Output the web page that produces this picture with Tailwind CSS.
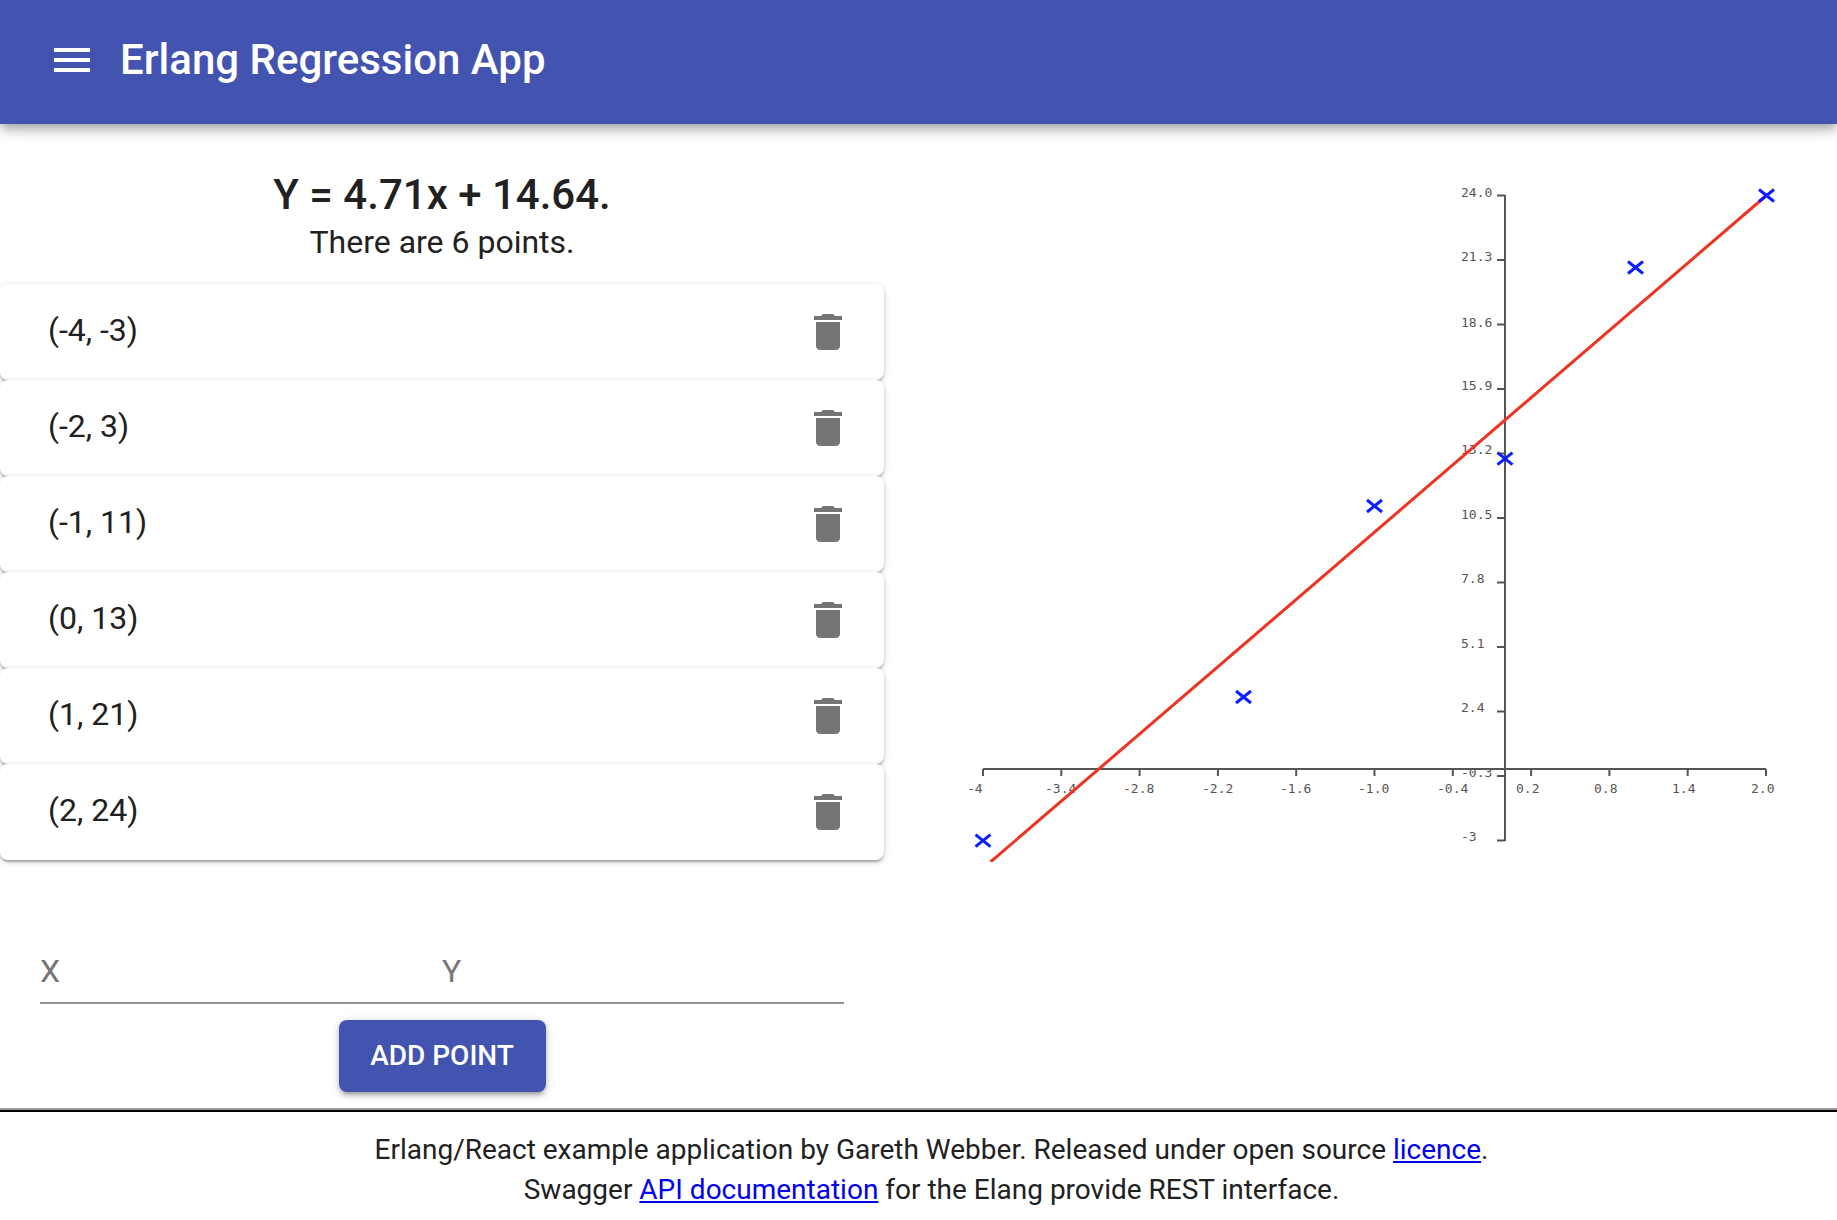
<!DOCTYPE html>
<html lang="en">
<head>
  <meta charset="UTF-8" />
  <meta name="viewport" content="width=device-width, initial-scale=1.0" />
  <title>Erlang Regression App</title>
  <script src="https://cdn.jsdelivr.net/npm/@tailwindcss/browser@4"></script>
</head>

<body class="bg-white text-[#212121] font-[Roboto,sans-serif]">
  <!-- App bar -->
  <header class="h-[124px] bg-[#4353b0] flex items-center pl-12 pb-1 text-white relative z-10 shadow-[0_4px_8px_-2px_rgba(0,0,0,0.2),0_8px_10px_0_rgba(0,0,0,0.14),0_2px_20px_0_rgba(0,0,0,0.12)]">
    <svg class="w-12 h-12 fill-white" viewBox="0 0 24 24"><path d="M3 18h18v-2H3v2zm0-5h18v-2H3v2zm0-7v2h18V6H3z"/></svg>
    <h1 class="ml-6 text-[42px] leading-[48px] font-medium">Erlang Regression App</h1>
  </header>

  <main class="flex h-[984px]">
    <!-- Left column -->
    <section class="w-[884px] shrink-0 pt-[46px]">
      <h2 class="text-center text-[42px] leading-[50px] font-medium">Y = 4.71x + 14.64.</h2>
      <p class="mt-[2px] text-center text-[32px] leading-10">There are 6 points.</p>

      <ul class="mt-[22px]">
        <li class="h-24 bg-white rounded-lg relative flex items-center justify-between pl-12 pr-8 text-[32px] shadow-[0_2px_6px_0_rgba(0,0,0,0.2),0_2px_2px_0_rgba(0,0,0,0.14),0_4px_2px_-2px_rgba(0,0,0,0.12)]">
          <span class="pb-1">(-4, -3)</span>
          <svg class="w-12 h-12 fill-[#757575]" viewBox="0 0 24 24"><path d="M6 19c0 1.1.9 2 2 2h8c1.1 0 2-.9 2-2V7H6v12zM19 4h-3.5l-1-1h-5l-1 1H5v2h14V4z"/></svg>
        </li>
        <li class="h-24 bg-white rounded-lg relative flex items-center justify-between pl-12 pr-8 text-[32px] shadow-[0_2px_6px_0_rgba(0,0,0,0.2),0_2px_2px_0_rgba(0,0,0,0.14),0_4px_2px_-2px_rgba(0,0,0,0.12)]">
          <span class="pb-1">(-2, 3)</span>
          <svg class="w-12 h-12 fill-[#757575]" viewBox="0 0 24 24"><path d="M6 19c0 1.1.9 2 2 2h8c1.1 0 2-.9 2-2V7H6v12zM19 4h-3.5l-1-1h-5l-1 1H5v2h14V4z"/></svg>
        </li>
        <li class="h-24 bg-white rounded-lg relative flex items-center justify-between pl-12 pr-8 text-[32px] shadow-[0_2px_6px_0_rgba(0,0,0,0.2),0_2px_2px_0_rgba(0,0,0,0.14),0_4px_2px_-2px_rgba(0,0,0,0.12)]">
          <span class="pb-1">(-1, 11)</span>
          <svg class="w-12 h-12 fill-[#757575]" viewBox="0 0 24 24"><path d="M6 19c0 1.1.9 2 2 2h8c1.1 0 2-.9 2-2V7H6v12zM19 4h-3.5l-1-1h-5l-1 1H5v2h14V4z"/></svg>
        </li>
        <li class="h-24 bg-white rounded-lg relative flex items-center justify-between pl-12 pr-8 text-[32px] shadow-[0_2px_6px_0_rgba(0,0,0,0.2),0_2px_2px_0_rgba(0,0,0,0.14),0_4px_2px_-2px_rgba(0,0,0,0.12)]">
          <span class="pb-1">(0, 13)</span>
          <svg class="w-12 h-12 fill-[#757575]" viewBox="0 0 24 24"><path d="M6 19c0 1.1.9 2 2 2h8c1.1 0 2-.9 2-2V7H6v12zM19 4h-3.5l-1-1h-5l-1 1H5v2h14V4z"/></svg>
        </li>
        <li class="h-24 bg-white rounded-lg relative flex items-center justify-between pl-12 pr-8 text-[32px] shadow-[0_2px_6px_0_rgba(0,0,0,0.2),0_2px_2px_0_rgba(0,0,0,0.14),0_4px_2px_-2px_rgba(0,0,0,0.12)]">
          <span class="pb-1">(1, 21)</span>
          <svg class="w-12 h-12 fill-[#757575]" viewBox="0 0 24 24"><path d="M6 19c0 1.1.9 2 2 2h8c1.1 0 2-.9 2-2V7H6v12zM19 4h-3.5l-1-1h-5l-1 1H5v2h14V4z"/></svg>
        </li>
        <li class="h-24 bg-white rounded-lg relative flex items-center justify-between pl-12 pr-8 text-[32px] shadow-[0_2px_6px_0_rgba(0,0,0,0.2),0_2px_2px_0_rgba(0,0,0,0.14),0_4px_2px_-2px_rgba(0,0,0,0.12)]">
          <span class="pb-1">(2, 24)</span>
          <svg class="w-12 h-12 fill-[#757575]" viewBox="0 0 24 24"><path d="M6 19c0 1.1.9 2 2 2h8c1.1 0 2-.9 2-2V7H6v12zM19 4h-3.5l-1-1h-5l-1 1H5v2h14V4z"/></svg>
        </li>
      </ul>

      <!-- Add point form -->
      <form class="mt-20 px-10">
        <div class="flex border-b-2 border-[#949494] h-16">
          <input type="text" placeholder="X" class="w-1/2 text-[32px] outline-none placeholder:text-[#757575]" />
          <input type="text" placeholder="Y" class="w-1/2 text-[32px] outline-none placeholder:text-[#757575]" />
        </div>
        <div class="mt-4 flex justify-center">
          <button type="button" class="w-[207px] h-[72px] bg-[#4353b0] text-white text-[28px] font-medium rounded-lg shadow-[0_2px_10px_0_rgba(0,0,0,0.2),0_4px_4px_0_rgba(0,0,0,0.14),0_6px_2px_-4px_rgba(0,0,0,0.12)]">ADD POINT</button>
        </div>
      </form>
    </section>

    <!-- Regression chart, viewBox is in page coordinates -->
    <section class="ml-[66px] pt-[46px]">
      <svg class="w-[887px] h-[692px]" viewBox="950 170 887 692">
        <g stroke="#555" stroke-width="2" fill="none">
          <path d="M1505 195V841"/>
          <path d="M983 769H1766"/>
          <path d="M1497 195.5h8M1497 260h8M1497 324.500h8M1497 389h8M1497 453.500h8M1497 518h8M1497 582.500h8M1497 647h8M1497 711.500h8M1497 776h8M1497 840.500h8"/>
          <path d="M983 769v7M1061.300 769v7M1139.600 769v7M1217.900 769v7M1296.200 769v7M1374.500 769v7M1452.800 769v7M1531.100 769v7M1609.400 769v7M1687.700 769v7M1766 769v7"/>
        </g>
        <g font-family="'DejaVu Sans Mono', monospace" font-size="13" fill="#555">
          <text x="1461" y="197">24.0</text>
          <text x="1461" y="261">21.3</text>
          <text x="1461" y="327">18.6</text>
          <text x="1461" y="390">15.9</text>
          <text x="1461" y="454">13.2</text>
          <text x="1461" y="519">10.5</text>
          <text x="1461" y="583">7.8</text>
          <text x="1461" y="648">5.1</text>
          <text x="1461" y="712">2.4</text>
          <text x="1461" y="777">-0.3</text>
          <text x="1461" y="841">-3</text>
          <text x="967" y="793">-4</text>
          <text x="1045" y="793">-3.4</text>
          <text x="1123" y="793">-2.8</text>
          <text x="1202" y="793">-2.2</text>
          <text x="1280" y="793">-1.6</text>
          <text x="1358" y="793">-1.0</text>
          <text x="1437" y="793">-0.4</text>
          <text x="1516" y="793">0.2</text>
          <text x="1594" y="793">0.8</text>
          <text x="1672" y="793">1.4</text>
          <text x="1751" y="793">2.0</text>
        </g>
        <path d="M1767 195L990.500 862" stroke="#ee3322" stroke-width="3" fill="none"/>
        <g stroke="#0a1eff" stroke-width="3" fill="none">
          <path d="M975.500 834.700l15 12m0-12l-15 12"/>
          <path d="M1236 691l15 12m0-12l-15 12"/>
          <path d="M1367 500l15 12m0-12l-15 12"/>
          <path d="M1497.500 452.600l15 12m0-12l-15 12"/>
          <path d="M1628 261.500l15 12m0-12l-15 12"/>
          <path d="M1759 189.500l15 12m0-12l-15 12"/>
        </g>
      </svg>
    </section>
  </main>

  <hr class="h-1 border-0 bg-black border-t-2 border-t-[#9a9a9a]" />

  <footer class="pt-[18px] pl-[26px] text-center text-[28px] leading-10">
    <p>Erlang/React example application by Gareth Webber. Released under open source <a href="#" class="text-[#0000ee] underline">licence</a>.</p>
    <p>Swagger <a href="#" class="text-[#0000ee] underline">API documentation</a> for the Elang provide REST interface.</p>
  </footer>
</body>
</html>
